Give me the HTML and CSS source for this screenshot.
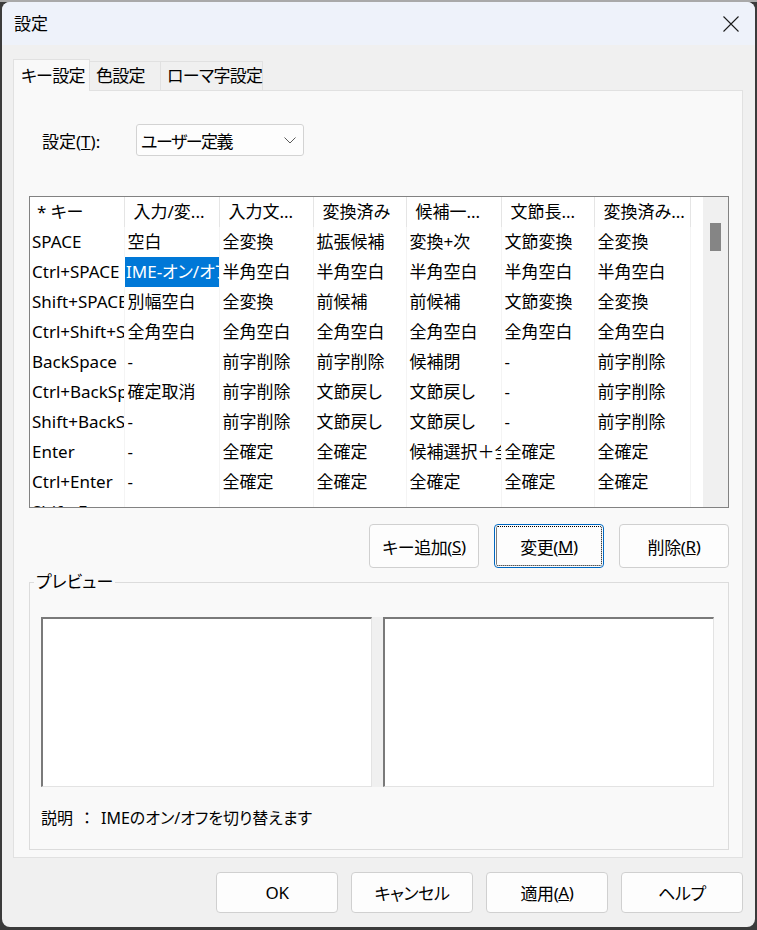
FILE: index.html
```html
<!DOCTYPE html>
<html lang="ja">
<head>
<meta charset="utf-8">
<title>設定</title>
<link rel="stylesheet" href="styles.css">
</head>
<body>
<div class="window">
  <div class="titlebar">
    <span class="title">設定</span>
    <svg class="close" width="16" height="16" viewBox="0 0 16 16"><path d="M0.5 0.5 L15.5 15.5 M15.5 0.5 L0.5 15.5" stroke="#1b1b1b" stroke-width="1.1" fill="none"/></svg>
  </div>
  <div class="content">
    <div class="tabs">
      <div class="tab active tab-key">キー設定</div>
      <div class="tab tab-color">色設定</div>
      <div class="tab tab-roma">ローマ字設定</div>
    </div>
    <div class="panel">
      <div class="setting-row">
        <span class="setting-label">設定(<u>T</u>):</span>
        <div class="combo">
          <span class="combo-text">ユーザー定義</span>
          <svg width="12" height="7" viewBox="0 0 12 7"><polyline points="0.5,0.5 6,6 11.5,0.5" fill="none" stroke="#5a5a5a" stroke-width="1"/></svg>
        </div>
      </div>
      <div class="list">
        <div class="list-main">
          <table class="grid">
            <colgroup>
              <col class="c94"><col class="c95"><col class="c94"><col class="c93"><col class="c95"><col class="c93"><col class="c96"><col>
            </colgroup>
            <thead>
              <tr><th>* キー</th><th>入力/変...</th><th>入力文...</th><th>変換済み</th><th>候補一...</th><th>文節長...</th><th>変換済み...</th><th class="filler"></th></tr>
            </thead>
            <tbody>
              <tr><td>SPACE</td><td>空白</td><td>全変換</td><td>拡張候補</td><td>変換+次</td><td>文節変換</td><td>全変換</td><td class="filler"></td></tr>
              <tr><td>Ctrl+SPACE</td><td class="sel">IME-オン/オフ</td><td>半角空白</td><td>半角空白</td><td>半角空白</td><td>半角空白</td><td>半角空白</td><td class="filler"></td></tr>
              <tr><td>Shift+SPACE</td><td>別幅空白</td><td>全変換</td><td>前候補</td><td>前候補</td><td>文節変換</td><td>全変換</td><td class="filler"></td></tr>
              <tr><td>Ctrl+Shift+SPACE</td><td>全角空白</td><td>全角空白</td><td>全角空白</td><td>全角空白</td><td>全角空白</td><td>全角空白</td><td class="filler"></td></tr>
              <tr><td>BackSpace</td><td>-</td><td>前字削除</td><td>前字削除</td><td>候補閉</td><td>-</td><td>前字削除</td><td class="filler"></td></tr>
              <tr><td>Ctrl+BackSpace</td><td>確定取消</td><td>前字削除</td><td>文節戻し</td><td>文節戻し</td><td>-</td><td>前字削除</td><td class="filler"></td></tr>
              <tr><td>Shift+BackSpace</td><td>-</td><td>前字削除</td><td>文節戻し</td><td>文節戻し</td><td>-</td><td>前字削除</td><td class="filler"></td></tr>
              <tr><td>Enter</td><td>-</td><td>全確定</td><td>全確定</td><td>候補選択＋全確定</td><td>全確定</td><td>全確定</td><td class="filler"></td></tr>
              <tr><td>Ctrl+Enter</td><td>-</td><td>全確定</td><td>全確定</td><td>全確定</td><td>全確定</td><td>全確定</td><td class="filler"></td></tr>
              <tr><td>Shift+Enter</td><td>-</td><td>-</td><td>-</td><td>-</td><td>-</td><td>-</td><td class="filler"></td></tr>
            </tbody>
          </table>
        </div>
        <div class="scrollbar"><div class="thumb"></div></div>
      </div>
      <div class="list-buttons">
        <button class="btn">キー追加(<u>S</u>)</button>
        <button class="btn focus">変更(<u>M</u>)</button>
        <button class="btn">削除(<u>R</u>)</button>
      </div>
      <fieldset class="preview">
        <legend>プレビュー</legend>
        <div class="preview-boxes">
          <div class="pbox"></div>
          <div class="splitter"></div>
          <div class="pbox"></div>
        </div>
        <div class="desc">説明<span class="colon">：</span>IMEのオン/オフを切り替えます</div>
      </fieldset>
    </div>
    <div class="dialog-buttons">
      <button class="btn">OK</button>
      <button class="btn">キャンセル</button>
      <button class="btn">適用(<u>A</u>)</button>
      <button class="btn">ヘルプ</button>
    </div>
  </div>
</div>
</body>
</html>
```

FILE: styles.css
```css
* { box-sizing: border-box; }
html, body { margin: 0; }
body {
  width: 757px;
  height: 930px;
  overflow: hidden;
  padding: 2px 2px 3px 2px;
  background: linear-gradient(#a9a9a9 0 2px, #3b3b3b 2px);
  font-family: "Noto Sans", "Noto Sans CJK JP", sans-serif;
  font-size: 17px;
  color: #000;
  font-feature-settings: "palt";
}
.window {
  width: 753px;
  height: 925px;
  border-radius: 8px;
  overflow: hidden;
  background: #f0f0f0;
  display: flex;
  flex-direction: column;
}
.titlebar {
  flex: none;
  height: 43px;
  background: #eef2fa;
  display: flex;
  align-items: center;
  justify-content: space-between;
  padding: 0 16px 0 12px;
}
.title { font-size: 17px; line-height: 20px; }
.close { display: block; }
.content {
  flex: 1;
  display: flex;
  flex-direction: column;
  padding: 14px 12px 14px 11px;
}
.tabs {
  display: flex;
  align-items: flex-end;
  height: 32px;
  margin-bottom: -1px;
  position: relative;
  z-index: 1;
}
.tab {
  height: 29px;
  border: 1px solid #e1e1e1;
  border-bottom: none;
  background: #f0f0f0;
  padding-left: 6px;
  line-height: 27px;
  white-space: nowrap;
  letter-spacing: -0.7px;
  margin-left: -1px;
  margin-bottom: 1px;
}
.tab.active {
  height: 32px;
  margin-bottom: 0;
  margin-left: 0;
  background: #f9f9f9;
  padding-left: 7px;
  line-height: 31px;
  position: relative;
  z-index: 2;
}
.tab-key { width: 77px; }
.tab-color { width: 72px; }
.tab-roma { width: 103px; }
.panel {
  height: 768px;
  background: #f9f9f9;
  border: 1px solid #e1e1e1;
  padding: 33px 13px 7px 15px;
  display: flex;
  flex-direction: column;
}
.setting-row {
  display: flex;
  align-items: center;
  height: 32px;
}
.setting-label { width: 94px; margin-left: 13px; }
.combo {
  width: 168px;
  height: 32px;
  background: #fdfdfd;
  border: 1px solid #d3d3d3;
  border-radius: 3px;
  display: flex;
  align-items: center;
  justify-content: space-between;
  padding: 0 7px 0 4px;
}
.combo-text { letter-spacing: -1.5px; }
.combo svg { display: block; }
.list {
  margin-top: 40px;
  height: 312px;
  flex: none;
  border: 1px solid #828282;
  background: #fff;
  display: flex;
}
.list-main { width: 673px; overflow: hidden; }
.scrollbar {
  width: 25px;
  background: #f0f0f0;
  padding: 26px 0 0 7px;
}
.thumb { width: 11px; height: 28px; background: #858585; }
.grid {
  border-collapse: collapse;
  table-layout: fixed;
  width: 673px;
}
.c93 { width: 93px; }
.c94 { width: 94px; }
.c95 { width: 95px; }
.c96 { width: 96px; }
.grid th, .grid td {
  height: 30px;
  padding: 0 0 0 3px;
  white-space: nowrap;
  overflow: hidden;
  text-align: left;
  font-weight: normal;
  line-height: 30px;
}
.grid th { padding-left: 9px; border-right: 1px solid #e5e5e5; }
.grid th:first-child { padding-left: 7px; }
.grid td { border-right: 1px solid #f4f4f4; }
.grid td:first-child { padding-left: 2px; }
.grid td.sel {
  background: #0078d7;
  color: #fff;
  border-left: 2px solid #fff;
  padding-left: 1px;
}
.grid .filler { border-right: none; }
.list-buttons {
  margin-top: 16px;
  display: flex;
  justify-content: flex-end;
  gap: 15px;
}
.btn {
  width: 110px;
  height: 44px;
  background: #fdfdfd;
  border: 1px solid #d0d0d0;
  border-radius: 4px;
  font: inherit;
  color: #000;
  padding: 0;
  letter-spacing: -0.4px;
  display: flex;
  align-items: center;
  justify-content: center;
}
.btn.focus {
  border-color: #0067c0;
  outline: 1px dotted #000;
  outline-offset: -3px;
}
.preview {
  margin: 4px 0 0;
  border: 1px solid #dcdcdc;
  padding: 25px 14px 19px 11px;
  min-width: 0;
}
.preview legend {
  padding: 0 2px;
  margin-left: -7px;
  line-height: 20px;
  height: 20px;
}
.preview-boxes { display: flex; height: 170px; }
.pbox {
  width: 331px;
  background: #fff;
  border-style: solid;
  border-width: 2px 1px 1px 2px;
  border-color: #7a7a7a #e3e3e3 #e3e3e3 #7a7a7a;
}
.splitter { width: 11px; background: #f0f0f0; }
.desc { margin-top: 19px; line-height: 24px; font-size: 16px; }
.colon { font-feature-settings: normal; margin: 0 6px; }
.dialog-buttons {
  margin-top: 14px;
  display: flex;
  justify-content: flex-end;
  gap: 13px;
}
.dialog-buttons .btn { width: 122px; height: 41px; }
```
